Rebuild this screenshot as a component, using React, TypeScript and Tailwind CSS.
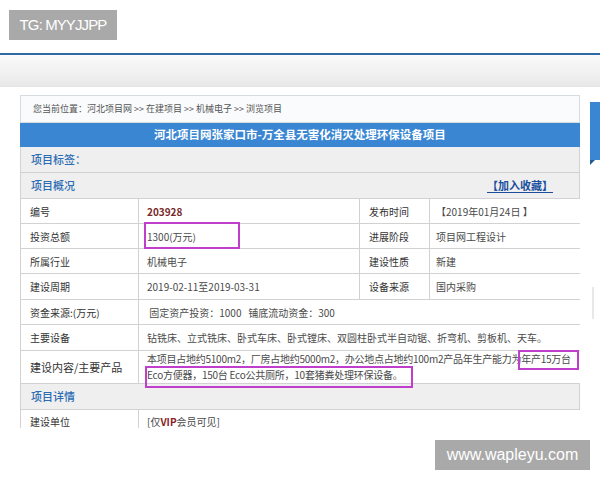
import React from "react";

interface PairRowProps {
  label: string;
  value: React.ReactNode;
  label2?: string;
  value2?: React.ReactNode;
  h?: string;
}

function PairRow({ label, value, label2, value2, h = "h-[25px]" }: PairRowProps) {
  if (label2 === undefined) {
    return (
      <div className={`grid grid-cols-[118px_447px] ${h}`}>
        <div className="flex items-center border-r border-b border-[#d2d2d2] pl-[9px] text-[#333]">{label}</div>
        <div className="flex items-center border-r border-b border-[#d2d2d2] pl-[8px] text-[#4a4a4a]">{value}</div>
      </div>
    );
  }
  return (
    <div className={`grid grid-cols-[118px_221px_70px_156px] ${h}`}>
      <div className="flex items-center border-r border-b border-[#d2d2d2] pl-[9px] text-[#333]">{label}</div>
      <div className="flex items-center border-r border-b border-[#d2d2d2] pl-[8px] text-[#4a4a4a]">{value}</div>
      <div className="flex items-center border-r border-b border-[#d2d2d2] pl-[9px] text-[#333]">{label2}</div>
      <div className="flex items-center border-r border-b border-[#d2d2d2] pl-[6px] text-[#4a4a4a]">{value2}</div>
    </div>
  );
}

function SectionRow({ title, extra }: { title: string; extra?: React.ReactNode }) {
  return (
    <div className="flex h-[26px] items-center justify-between border-r border-b border-[#d2d2d2] bg-[#efefef] pl-[10px] pr-[26px]">
      <span className="text-[11px] font-medium text-[#2b6cb3]">{title}</span>
      {extra}
    </div>
  );
}

export default function App() {
  return (
    <div className="relative h-[480px] w-[600px] overflow-hidden bg-white font-['Noto_Sans_CJK_SC',sans-serif]">
      {/* watermark top */}
      <div className="absolute left-[9px] top-[10px] flex h-[30px] w-[108px] items-center justify-center bg-[#a9a9a9] font-['Liberation_Sans',sans-serif] text-[15px] tracking-[-0.9px] text-white">
        TG: MYYJJPP
      </div>

      <div className="h-[53px]" />
      <div className="h-[2px] bg-[#2f6aa6]" />
      <div className="h-[32px] border-b border-[#e4e4e4] bg-gradient-to-b from-[#fafafa] to-[#e9e9e9]" />

      <div className="flex pt-[8px]">
        <div className="relative ml-[20px] h-[333px] w-[565px] overflow-hidden text-[10px]">
          {/* breadcrumb */}
          <div className="flex h-[28px] items-center border border-[#d6dbe0] bg-[#f9fbfd] pl-[12px] text-[9px] text-[#555]">
            您当前位置：河北项目网 &gt;&gt; 在建项目 &gt;&gt; 机械电子 &gt;&gt; 浏览项目
          </div>
          {/* title */}
          <div className="flex h-[24px] items-center justify-center bg-[#3a86d2] text-[11.5px] font-bold text-white">
            河北项目网张家口市-万全县无害化消灭处理环保设备项目
          </div>

          <div className="border-l border-[#d2d2d2]">
            <SectionRow title="项目标签：" />
            <SectionRow
              title="项目概况"
              extra={
                <span className="text-[11px] font-bold text-[#1b4f9e] underline underline-offset-2">【加入收藏】</span>
              }
            />
            <PairRow
              label="编号"
              value={<span className="font-bold text-[#7b2a2a]">203928</span>}
              label2="发布时间"
              value2="【2019年01月24日 】"
            />
            <PairRow label="投资总额" value="1300(万元)" label2="进展阶段" value2="项目网工程设计" />
            <PairRow label="所属行业" value="机械电子" label2="建设性质" value2="新建" />
            <PairRow label="建设周期" value="2019-02-11至2019-03-31" label2="设备来源" value2="国内采购" h="h-[26px]" />
            <PairRow
              label="资金来源:(万元)"
              value={<span className="whitespace-pre"> 固定资产投资：1000   铺底流动资金：300</span>}
            />
            <PairRow
              label="主要设备"
              value="钻铣床、立式铣床、卧式车床、卧式镗床、双圆柱卧式半自动锯、折弯机、剪板机、天车。"
              h="h-[26px]"
            />
            <div className="grid h-[33px] grid-cols-[118px_447px]">
              <div className="flex items-center border-r border-b border-[#d2d2d2] pl-[9px] text-[11px] text-[#333]">
                建设内容/主要产品
              </div>
              <div className="flex items-center border-r border-b border-[#d2d2d2] pl-[8px] leading-[16px] text-[#4a4a4a]">
                <p className="whitespace-nowrap tracking-[-0.25px]">
                  本项目占地约5100m2，厂房占地约5000m2，办公地点占地约100m2产品年生产能力为年产15万台
                  <br />
                  Eco方便器，150台 Eco公共厕所，10套猪粪处理环保设备。
                </p>
              </div>
            </div>
            <SectionRow title="项目详情" />
            <PairRow
              label="建设单位"
              h="h-[23px]"
              value={
                <span>
                  [仅<b className="text-[#8b1e1e]">VIP</b>会员可见]
                </span>
              }
            />
          </div>

          {/* annotation boxes */}
          <div className="absolute left-[124px] top-[127px] h-[27px] w-[96px] border-2 border-[#bf3fcc]" />
          <div className="absolute left-[498px] top-[255px] h-[20px] w-[61px] border-2 border-[#bf3fcc]" />
          <div className="absolute left-[125px] top-[271px] h-[22px] w-[268px] border-2 border-[#bf3fcc]" />
        </div>

        {/* sidebar edge */}
        <div className="ml-[10px] flex flex-col">
          <div className="mt-[7px] h-[58px] w-[10px] bg-[#3a86d2]" />
          <div className="h-0 w-0 border-t-[5px] border-r-[5px] border-t-[#245a94] border-r-transparent" />
          <div className="ml-[2px] mt-[122px] h-[32px] w-[2px] bg-[#e8e8e8]" />
        </div>
      </div>

      {/* watermark bottom */}
      <div className="absolute left-[435px] top-[440px] flex h-[30px] w-[155px] items-center justify-center bg-[#a9a9a9] font-['Liberation_Sans',sans-serif] text-[16px] text-white">
        www.wapleyu.com
      </div>
    </div>
  );
}
